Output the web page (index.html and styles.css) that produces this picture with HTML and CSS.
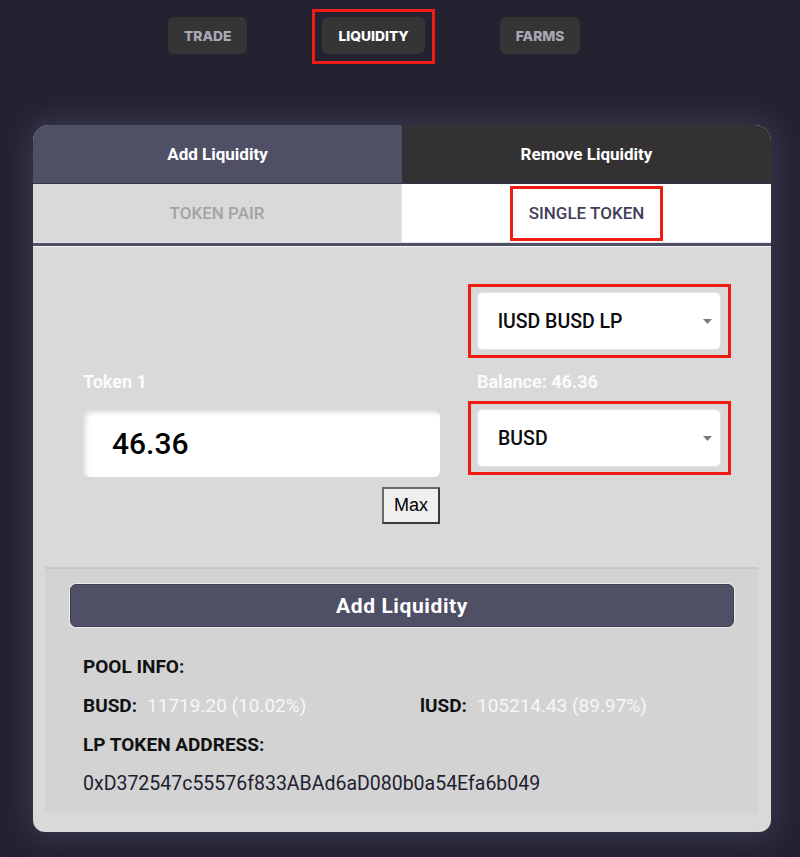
FILE: index.html
```html
<!DOCTYPE html>
<html>
<head>
<meta charset="utf-8">
<link rel="stylesheet" href="styles.css">
</head>
<body>
<nav class="nav">
  <div class="nav-btn">TRADE</div>
  <div class="nav-mark"><div class="nav-btn active">LIQUIDITY</div></div>
  <div class="nav-btn">FARMS</div>
</nav>

<main class="card">
  <div class="tabs">
    <div class="tab tab-add">Add Liquidity</div>
    <div class="tab tab-remove">Remove Liquidity</div>
  </div>
  <div class="subtabs">
    <div class="subtab subtab-pair">TOKEN PAIR</div>
    <div class="subtab subtab-single"><span class="mark-box">SINGLE TOKEN</span></div>
  </div>
  <div class="divider"></div>

  <section class="body">
    <div class="form">
      <div class="cell-empty"></div>
      <div class="mark-wrap">
        <div class="select">
          <span>lUSD BUSD LP</span>
          <svg class="caret" width="9" height="5" viewBox="0 0 9 5"><path d="M0 0H9L4.5 5Z" fill="#7a7a7a"/></svg>
        </div>
      </div>

      <div class="label">Token 1</div>
      <div class="label label-right">Balance: 46.36</div>

      <div class="input">46.36</div>
      <div class="mark-wrap mark-wrap-low">
        <div class="select">
          <span>BUSD</span>
          <svg class="caret" width="9" height="5" viewBox="0 0 9 5"><path d="M0 0H9L4.5 5Z" fill="#7a7a7a"/></svg>
        </div>
      </div>

      <button class="max-btn">Max</button>
    </div>

    <div class="panel">
      <button class="submit">Add Liquidity</button>
      <div class="info">
        <div class="info-title">POOL INFO:</div>
        <div class="info-row">
          <div><span class="k">BUSD:</span><span class="v">11719.20 (10.02%)</span></div>
          <div><span class="k">lUSD:</span><span class="v">105214.43 (89.97%)</span></div>
        </div>
        <div class="info-title">LP TOKEN ADDRESS:</div>
        <div class="address">0xD372547c55576f833ABAd6aD080b0a54Efa6b049</div>
      </div>
    </div>
  </section>
</main>
</body>
</html>
```

FILE: styles.css
```css
* { box-sizing: border-box; }

html, body {
  margin: 0;
  padding: 0;
  background: #232230;
  font-family: Roboto, "Noto Sans", sans-serif;
}

body {
  height: 857px;
  overflow: hidden;
}

.nav {
  display: flex;
  align-items: flex-start;
  gap: 65px;
  padding: 9px 0 0 168px;
}

.nav > .nav-btn { margin-top: 8px; }

.nav-mark {
  border: 3px solid #ee1c12;
  padding: 5px 7px 7px 7px;
}

.nav-btn {
  height: 37px;
  padding: 0 16px;
  display: flex;
  align-items: center;
  background: #363535;
  border-radius: 6px;
  color: #a9a8b6;
  font-family: Inter, "Open Sans", sans-serif;
  font-weight: 800;
  font-size: 13.8px;
}

.nav-btn.active { color: #ffffff; }

.card {
  width: 738px;
  margin: 61px 0 0 33px;
  border-radius: 16px 16px 12px 12px;
  overflow: hidden;
  background: #d9d9d9;
  box-shadow: 0 0 28px 8px rgba(78, 78, 108, 0.45);
}

.tabs {
  display: grid;
  grid-template-columns: 369px 369px;
  height: 59px;
}

.tab {
  display: flex;
  align-items: center;
  justify-content: center;
  color: #ffffff;
  font-weight: 700;
  font-size: 17px;
  border-bottom: 1px solid #34344a;
}

.tab-add { background: #4f4f66; }
.tab-remove { background: #333131; }

.subtabs {
  display: grid;
  grid-template-columns: 369px 369px;
  height: 58px;
}

.subtab {
  display: flex;
  align-items: center;
  justify-content: center;
  font-weight: 500;
  font-size: 17px;
}

.subtab-pair {
  background: #d9d9d9;
  color: #a3a3a3;
  border-right: 1px solid #e6e6e6;
}

.subtab-single {
  background: #ffffff;
  color: #3f3e58;
}

.mark-box {
  border: 3px solid #ee1c12;
  padding: 15px 16px;
  line-height: 19px;
}

.divider {
  height: 5px;
  background: #4f4f66;
  border-top: 1px solid #e6e6e6;
  border-bottom: 1px solid #f6f6f6;
}

.body {
  padding: 37px 0 19px 0;
}

.form {
  display: grid;
  grid-template-columns: 357px 263px;
  column-gap: 28px;
  padding-left: 50px;
  align-items: start;
}

.mark-wrap {
  border: 3px solid #ee1c12;
  padding: 5px 7px 5px 6px;
  height: 74px;
}

.mark-wrap-low { margin-top: 9px; }

.select {
  height: 58px;
  background: #ffffff;
  border: 1px solid #e2e2ea;
  border-radius: 5px;
  display: flex;
  align-items: center;
  justify-content: space-between;
  padding: 0 8px 0 20px;
  font-size: 19.5px;
  font-weight: 500;
  color: #0c0c0c;
}

.caret { display: block; }

.label {
  margin-top: 13px;
  line-height: 21px;
  color: #fbfbfb;
  font-weight: 700;
  font-size: 18px;
}

.label-right { padding-left: 9px; }

.input {
  margin-top: 18px;
  height: 67px;
  background: #ffffff;
  border-radius: 6px;
  box-shadow: inset 3px 3px 4px rgba(0, 0, 0, 0.13);
  padding-left: 29px;
  display: flex;
  align-items: center;
  font-size: 30px;
  font-weight: 500;
  color: #000;
}

.max-btn {
  grid-column: 1;
  justify-self: end;
  margin-top: 10px;
  height: 37px;
  width: 58px;
  padding: 0;
  font-family: "Liberation Sans", Arial, sans-serif;
  font-size: 18px;
  color: #000;
  background: #efefef;
  border: 2px solid;
  border-color: #6a6a6a #3a3a3a #3a3a3a #6a6a6a;
}

.panel {
  margin: 43px 13px 0 12px;
  background: #d3d3d3;
  border-top: 2px solid #c7c7c7;
  padding: 15px 24px 10px 25px;
}

.submit {
  display: block;
  width: 100%;
  height: 43px;
  background: #4f4f66;
  border: 1px solid #3d3d52;
  border-radius: 6px;
  box-shadow: 0 0 0 1px #ececec;
  color: #ffffff;
  font-family: Roboto, sans-serif;
  font-weight: 700;
  font-size: 21px;
  letter-spacing: 0.6px;
}

.info {
  margin-top: 20px;
  padding-left: 13px;
}

.info-title {
  line-height: 39px;
  font-weight: 700;
  font-size: 19px;
  color: #111111;
}

.info-row {
  display: grid;
  grid-template-columns: 337px auto;
  line-height: 39px;
  font-size: 19px;
}

.k {
  font-weight: 700;
  color: #111111;
}

.v {
  margin-left: 10px;
  color: #f7f7f7;
}

.address {
  line-height: 39px;
  font-size: 19.5px;
  color: #1e2131;
}
```
